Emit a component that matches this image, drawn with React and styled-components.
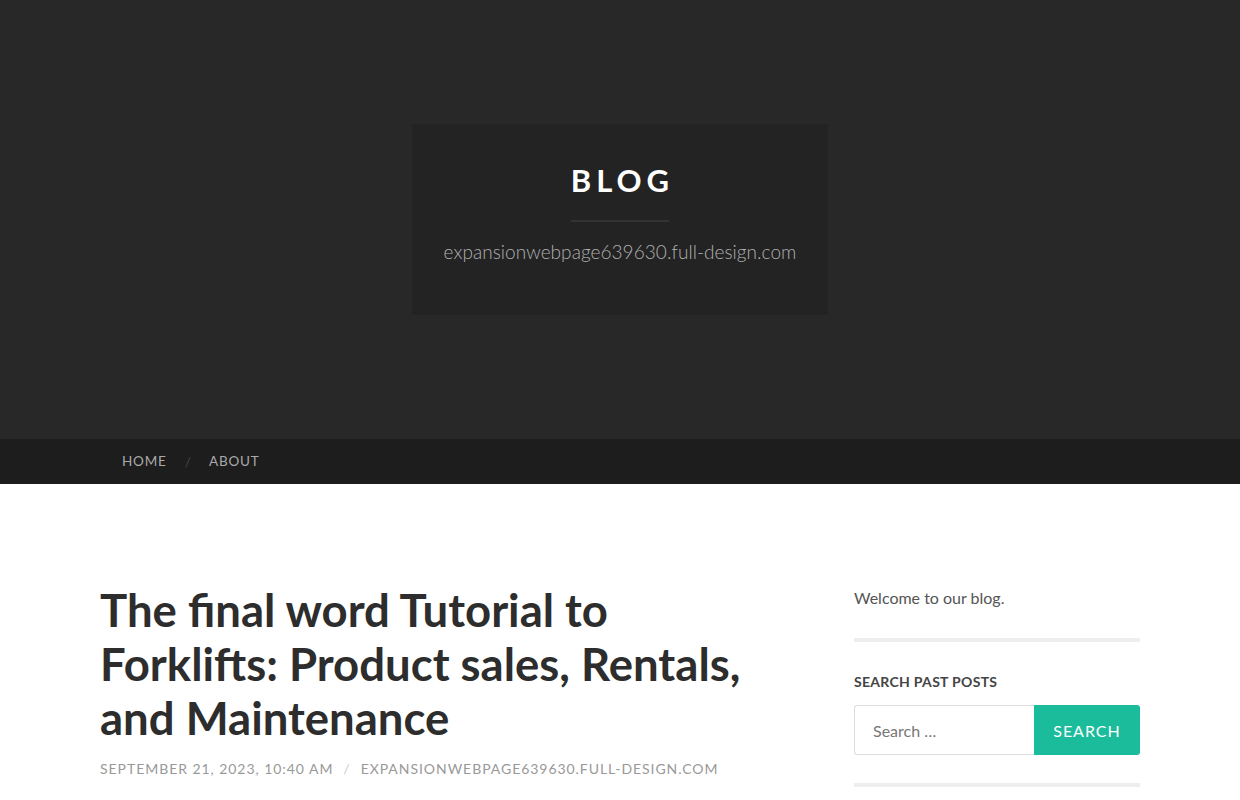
import React from "react";
import styled, { createGlobalStyle } from "styled-components";

const GlobalStyle = createGlobalStyle`
  html, body { margin: 0; padding: 0; }
  body {
    background: #fff;
    font-family: Lato, "Liberation Sans", sans-serif;
    color: #444;
  }
  * { box-sizing: border-box; }
`;

const Header = styled.header`
  background: #282828;
  height: 439px;
  display: flex;
  justify-content: center;
  padding-top: 124px;
`;

const BlogInfo = styled.div`
  background: rgba(0, 0, 0, 0.12);
  width: 416px;
  height: 191px;
  display: flex;
  flex-direction: column;
  align-items: center;
  padding-top: 37px;
`;

const BlogTitle = styled.h1`
  margin: 0;
  font-family: Lato, sans-serif;
  font-weight: 700;
  font-size: 31px;
  line-height: 38px;
  letter-spacing: 5px;
  margin-right: -5px;
  color: #fff;
  text-transform: uppercase;
`;

const TitleRule = styled.div`
  width: 98px;
  height: 2px;
  background: #333;
  margin: 21px 0 18px;
`;

const BlogDesc = styled.p`
  margin: 0;
  font-family: Lato, sans-serif;
  font-weight: 300;
  font-size: 19px;
  letter-spacing: 0.05px;
  color: #b0b0b0;
`;

const NavBar = styled.nav`
  background: #1d1d1d;
  height: 45px;
`;

const NavInner = styled.ul`
  list-style: none;
  margin: 0 auto;
  padding: 0;
  width: 1040px;
  display: flex;
  align-items: center;
  height: 100%;
`;

const NavItem = styled.li`
  display: flex;
  align-items: center;
  font-size: 13.5px;
  letter-spacing: 0.8px;
  text-transform: uppercase;
  color: #aaa;
  padding: 0 18px 1px 22px;
`;

const Sep = styled.span`
  color: #444;
  font-size: 14px;
  margin-right: -4px;
`;

const Main = styled.div`
  width: 1040px;
  margin: 0 auto;
  padding-top: 99px;
  display: flex;
  justify-content: space-between;
`;

const Content = styled.article`
  width: 676px;
`;

const PostTitle = styled.h2`
  margin: 0;
  font-family: Lato, sans-serif;
  font-weight: 700;
  font-size: 45.5px;
  line-height: 54px;
  color: #2d2d2d;
`;

const Meta = styled.div`
  margin-top: 15px;
  font-size: 14px;
  letter-spacing: 0.95px;
  text-transform: uppercase;
  color: #999;
  display: flex;
  gap: 10px;
`;

const MetaSep = styled.span`
  color: #ccc;
`;

const Sidebar = styled.aside`
  width: 286px;
  padding-top: 3px;
`;

const Welcome = styled.p`
  margin: 0;
  font-size: 16px;
  line-height: 24px;
  color: #555;
`;

const Rule = styled.div`
  height: 4px;
  background: #eee;
  margin-top: 28px;
`;

const WidgetTitle = styled.h3`
  margin: 31px 0 0;
  font-size: 14px;
  font-weight: 700;
  letter-spacing: 0.3px;
  text-transform: uppercase;
  color: #444;
`;

const SearchForm = styled.form`
  display: flex;
  margin-top: 15px;
`;

const SearchInput = styled.input`
  width: 180px;
  height: 50px;
  border: 1px solid #ddd;
  border-right: none;
  border-radius: 3px 0 0 3px;
  padding: 0 18px;
  font-family: Lato, sans-serif;
  font-size: 16px;
  color: #555;
  outline: none;
  &::placeholder { color: #777; }
`;

const SearchButton = styled.button`
  width: 106px;
  height: 50px;
  border: none;
  border-radius: 0 3px 3px 0;
  background: #1abc9c;
  color: #fff;
  font-family: Lato, sans-serif;
  font-size: 16px;
  letter-spacing: 1px;
  text-transform: uppercase;
`;

export default function App() {
  return (
    <>
      <GlobalStyle />
      <Header>
        <BlogInfo>
          <BlogTitle>Blog</BlogTitle>
          <TitleRule />
          <BlogDesc>expansionwebpage639630.full-design.com</BlogDesc>
        </BlogInfo>
      </Header>
      <NavBar>
        <NavInner>
          <NavItem>Home</NavItem>
          <Sep>/</Sep>
          <NavItem>About</NavItem>
        </NavInner>
      </NavBar>
      <Main>
        <Content>
          <PostTitle>The final word Tutorial to Forklifts: Product sales, Rentals, and Maintenance</PostTitle>
          <Meta>
            <span>September 21, 2023, 10:40 am</span>
            <MetaSep>/</MetaSep>
            <span>expansionwebpage639630.full-design.com</span>
          </Meta>
        </Content>
        <Sidebar>
          <Welcome>Welcome to our blog.</Welcome>
          <Rule />
          <WidgetTitle>Search Past Posts</WidgetTitle>
          <SearchForm onSubmit={(e) => e.preventDefault()}>
            <SearchInput placeholder="Search …" />
            <SearchButton type="submit">Search</SearchButton>
          </SearchForm>
          <Rule />
        </Sidebar>
      </Main>
    </>
  );
}
